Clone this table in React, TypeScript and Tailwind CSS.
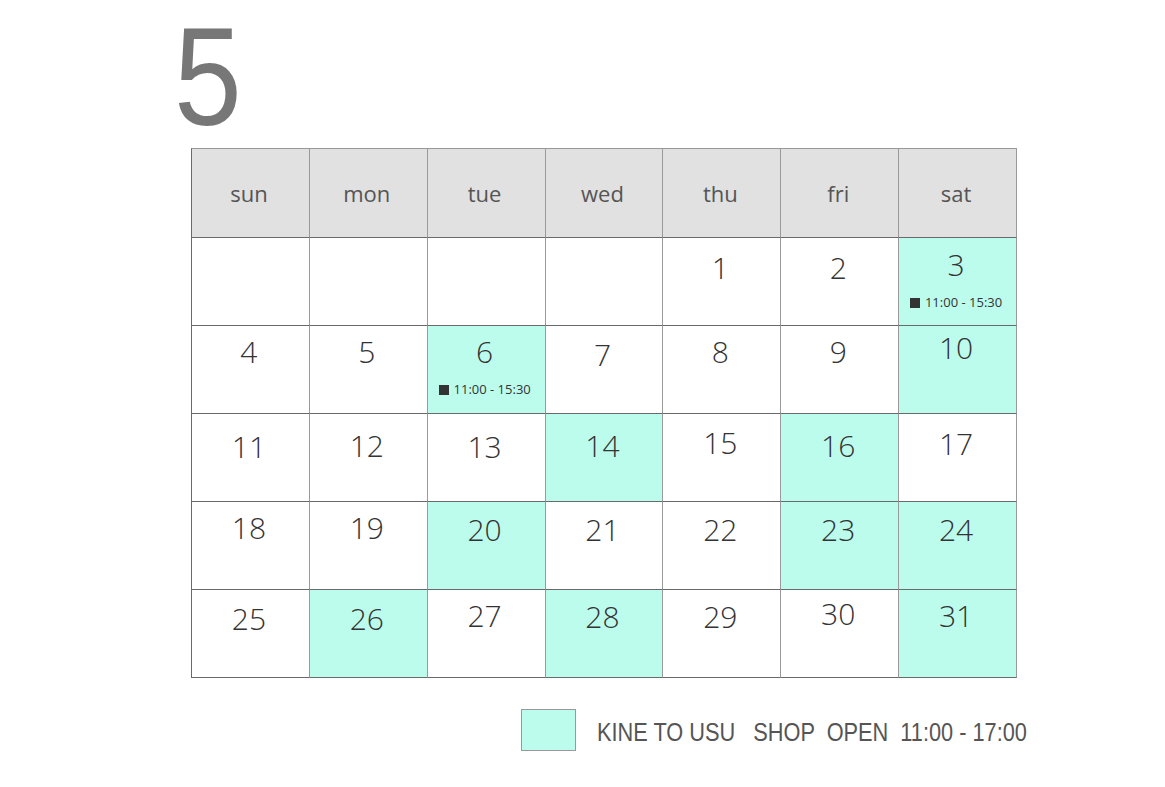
import React from "react";

type Cell = {
  d?: number;
  pt: string; // top padding, hand-tuned per cell
  open?: boolean;
  time?: string;
};

const days = ["sun", "mon", "tue", "wed", "thu", "fri", "sat"];

// weeks of May
const weeks: Cell[][] = [
  [
    { pt: "pt-[15px]" },
    { pt: "pt-[15px]" },
    { pt: "pt-[15px]" },
    { pt: "pt-[15px]" },
    { d: 1, pt: "pt-[15px]" },
    { d: 2, pt: "pt-[15px]" },
    { d: 3, pt: "pt-[12px]", open: true, time: "11:00 - 15:30" },
  ],
  [
    { d: 4, pt: "pt-[11px]" },
    { d: 5, pt: "pt-[11px]" },
    { d: 6, pt: "pt-[11px]", open: true, time: "11:00 - 15:30" },
    { d: 7, pt: "pt-[14px]" },
    { d: 8, pt: "pt-[11px]" },
    { d: 9, pt: "pt-[11px]" },
    { d: 10, pt: "pt-[7px]", open: true },
  ],
  [
    { d: 11, pt: "pt-[18px]" },
    { d: 12, pt: "pt-[17px]" },
    { d: 13, pt: "pt-[18px]" },
    { d: 14, pt: "pt-[17px]", open: true },
    { d: 15, pt: "pt-[14px]" },
    { d: 16, pt: "pt-[17px]", open: true },
    { d: 17, pt: "pt-[15px]" },
  ],
  [
    { d: 18, pt: "pt-[11px]" },
    { d: 19, pt: "pt-[11px]" },
    { d: 20, pt: "pt-[13px]", open: true },
    { d: 21, pt: "pt-[13px]" },
    { d: 22, pt: "pt-[13px]" },
    { d: 23, pt: "pt-[13px]", open: true },
    { d: 24, pt: "pt-[13px]", open: true },
  ],
  [
    { d: 25, pt: "pt-[14px]" },
    { d: 26, pt: "pt-[14px]", open: true },
    { d: 27, pt: "pt-[11px]" },
    { d: 28, pt: "pt-[12px]", open: true },
    { d: 29, pt: "pt-[12px]" },
    { d: 30, pt: "pt-[9px]" },
    { d: 31, pt: "pt-[11px]", open: true },
  ],
];

function DayCell({ cell }: { cell: Cell }) {
  return (
    <div
      className={`h-[88px] border-r border-b border-r-[#9a9a9a] border-b-[#6a6a6a] flex flex-col items-center pr-[3px] ${cell.pt} ${
        cell.open ? "bg-[#bcfced]" : "bg-white"
      }`}
    >
      {cell.d !== undefined && (
        <span className="text-[30px] font-[350] leading-none text-[#333]">{cell.d}</span>
      )}
      {cell.time && (
        <span className="mt-[16px] flex items-center gap-[5px] text-[13px] leading-none text-[#333]">
          <span className="inline-block w-[10px] h-[10px] bg-[#333]" />
          {cell.time}
        </span>
      )}
    </div>
  );
}

export default function App() {
  return (
    <div className="w-[1165px] h-[787px] bg-white font-['Open_Sans','Noto_Sans',sans-serif]">
      <div className="pl-[174px] pt-[7px]">
        {/* MONTH */}
        <div className="h-[140px]">
          <span className="inline-block origin-left scale-x-[0.87] text-[140px] leading-none text-[#777] font-['Liberation_Sans',Arial,sans-serif]">
            5
          </span>
        </div>

        {/* CALENDAR */}
        <div className="ml-[17px] mt-[1px] w-[826px] grid grid-cols-7 border-t border-l border-t-[#999] border-l-[#6a6a6a]">
          {days.map((d) => (
            <div
              key={d}
              className="h-[89px] bg-[#e1e1e1] border-r border-b border-r-[#9a9a9a] border-b-[#6a6a6a] flex items-center justify-center pr-[3px] text-[22px] text-[#555]"
            >
              {d}
            </div>
          ))}
          {weeks.flat().map((c, i) => (
            <DayCell key={i} cell={c} />
          ))}
        </div>

        {/* LEGEND */}
        <div className="ml-[347px] mt-[31px] flex items-center gap-[21px]">
          <div className="w-[55px] h-[42px] bg-[#bcfced] border border-[#999]" />
          <span className="inline-block origin-left scale-x-[0.87] mt-[4px] whitespace-pre text-[25px] leading-none text-[#555] font-['Liberation_Sans',sans-serif]">
            {"KINE TO USU   SHOP  OPEN  11:00 - 17:00"}
          </span>
        </div>
      </div>
    </div>
  );
}
